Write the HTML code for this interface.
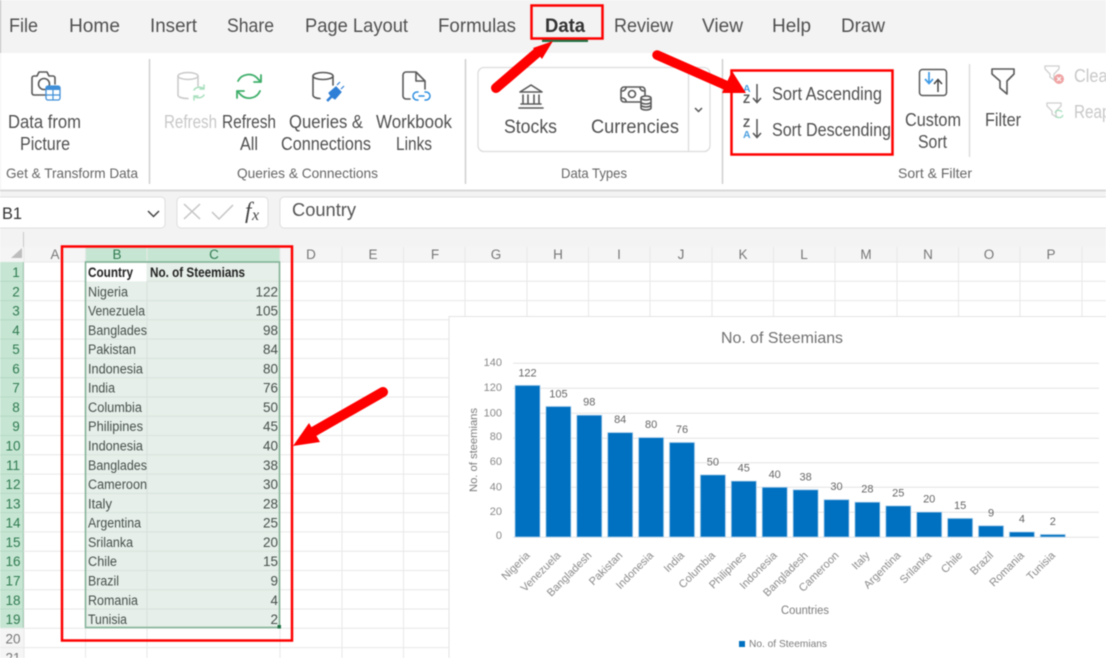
<!DOCTYPE html>
<html><head><meta charset="utf-8"><style>
html,body{margin:0;padding:0;background:#fff}
svg{display:block;filter:blur(.4px)}
text{font-family:"Liberation Sans",sans-serif;fill:#4a4a4a}
.t{font-size:19.5px;fill:#505050}
.r{font-size:18.5px;fill:#505050}
.g{font-size:14px;fill:#666}
.c{font-size:13.5px;fill:#474f4b}
.n{font-size:13.5px;fill:#474f4b;text-anchor:end}
.rh{font-size:13.5px;fill:#2f7a50;text-anchor:middle}
.ch{font-size:13.5px;fill:#777;text-anchor:middle}
.v{font-size:11px;fill:#666;text-anchor:middle}
.x{font-size:11px;fill:#8a8a8a;text-anchor:end}
.y{font-size:11px;fill:#8a8a8a;text-anchor:end}
.i{fill:none;stroke:#595959;stroke-width:1.6;stroke-linecap:round;stroke-linejoin:round}
</style></head><body>
<svg width="1106" height="658" viewBox="0 0 1106 658" xmlns="http://www.w3.org/2000/svg">
<rect width="1106" height="658" fill="#fff"/>
<rect width="1106" height="247" fill="#f3f3f3"/>
<rect x="0" y="0" width="1" height="53" fill="#bbb"/>
<rect x="1" y="53" width="1105" height="137" fill="#fff"/>
<rect x="0" y="189.500" width="1106" height="2" fill="#d9d9d9"/>
<text class="t" x="9" y="32" textLength="29" lengthAdjust="spacingAndGlyphs">File</text>
<text class="t" x="69" y="32" textLength="51" lengthAdjust="spacingAndGlyphs">Home</text>
<text class="t" x="150" y="32" textLength="47" lengthAdjust="spacingAndGlyphs">Insert</text>
<text class="t" x="227" y="32" textLength="47" lengthAdjust="spacingAndGlyphs">Share</text>
<text class="t" x="305" y="32" textLength="103" lengthAdjust="spacingAndGlyphs">Page Layout</text>
<text class="t" x="438" y="32" textLength="78" lengthAdjust="spacingAndGlyphs">Formulas</text>
<text class="t" x="545" y="32" textLength="40" lengthAdjust="spacingAndGlyphs" style="font-weight:700;fill:#333">Data</text>
<text class="t" x="614" y="32" textLength="59" lengthAdjust="spacingAndGlyphs">Review</text>
<text class="t" x="702" y="32" textLength="41" lengthAdjust="spacingAndGlyphs">View</text>
<text class="t" x="772" y="32" textLength="39" lengthAdjust="spacingAndGlyphs">Help</text>
<text class="t" x="841" y="32" textLength="44" lengthAdjust="spacingAndGlyphs">Draw</text>
<rect x="542" y="39" width="46" height="3" fill="#217346"/>
<path d="M149.500 59V184M465.500 59V184M722.500 59V184" stroke="#cfcfcf" stroke-width="1.500"/>
<path d="M969.500 64V157" stroke="#dcdcdc" stroke-width="1.500"/>
<text class="r" x="8" y="128" textLength="73" lengthAdjust="spacingAndGlyphs">Data from</text>
<text class="r" x="20" y="150" textLength="50" lengthAdjust="spacingAndGlyphs">Picture</text>
<text class="r" x="164" y="128" textLength="53" lengthAdjust="spacingAndGlyphs" style="fill:#c8c8c8">Refresh</text>
<text class="r" x="222" y="128" textLength="54" lengthAdjust="spacingAndGlyphs">Refresh</text>
<text class="r" x="240" y="150" textLength="18" lengthAdjust="spacingAndGlyphs">All</text>
<text class="r" x="289" y="128" textLength="74" lengthAdjust="spacingAndGlyphs">Queries &amp;</text>
<text class="r" x="281" y="150" textLength="90" lengthAdjust="spacingAndGlyphs">Connections</text>
<text class="r" x="376" y="128" textLength="76" lengthAdjust="spacingAndGlyphs">Workbook</text>
<text class="r" x="396" y="150" textLength="36" lengthAdjust="spacingAndGlyphs">Links</text>
<text class="g" x="6" y="178" textLength="132" lengthAdjust="spacingAndGlyphs">Get &amp; Transform Data</text>
<text class="g" x="237" y="178" textLength="141" lengthAdjust="spacingAndGlyphs">Queries &amp; Connections</text>
<text class="g" x="561" y="178" textLength="66" lengthAdjust="spacingAndGlyphs">Data Types</text>
<text class="g" x="898" y="178" textLength="74" lengthAdjust="spacingAndGlyphs">Sort &amp; Filter</text>
<path class="i" d="M37 76l2-4h8l2 4h4a2 2 0 0 1 2 2v6M45 95H34a2 2 0 0 1-2-2V78a2 2 0 0 1 2-2h3"/>
<circle class="i" cx="44" cy="84" r="5.500"/>
<rect x="46" y="86" width="14" height="14" rx="2" fill="#fff" stroke="#3f8fd8" stroke-width="1.300"/>
<rect x="46" y="86" width="14" height="4" fill="#3f8fd8"/>
<path d="M53 90v10M46 95h14" stroke="#3f8fd8" stroke-width="1.200"/>
<g fill="none" stroke="#c9c9c9" stroke-width="1.500" stroke-linecap="round">
<ellipse cx="188" cy="76" rx="10" ry="3.500"/><path d="M178 76v19c0 2 4 3.500 10 3.500M198 76v10"/></g>
<g fill="none" stroke="#a8dfbd" stroke-width="1.500" stroke-linecap="round"><path d="M194 90a6 5 0 0 1 10-1M204 95a6 5 0 0 1-10 1M204 85v4h-4M194 100v-4h4"/></g>
<g fill="none" stroke="#3fae6a" stroke-width="1.800" stroke-linecap="round" stroke-linejoin="round"><path d="M238 81a12 12 0 0 1 20-2l3 3M260 91a12 12 0 0 1-20 3l-3-3M261 75v7h-7M237 98v-7h7"/></g>
<ellipse class="i" cx="323" cy="76" rx="10" ry="3.500"/><path class="i" d="M313 76v19c0 2 3 3.500 7 3.500M333 76v9"/>
<path d="M327 100l4-4-2-3 7-6 5 5-6 7-3-2-4 4z M337 85l3-3M341 89l3-3" fill="#2f7fd6" stroke="#2f7fd6" stroke-width="1.200"/>
<path class="i" d="M410 99h-4a3 3 0 0 1-3-3V75a3 3 0 0 1 3-3h10l9 9v8M416 72v9h9"/>
<path d="M418 92h-1a4 4 0 0 0 0 8h1M425 92h1a4 4 0 0 1 0 8h-1M419 96h5" fill="none" stroke="#2f8fe0" stroke-width="1.500" stroke-linecap="round"/>
<rect x="478" y="67.500" width="232" height="84" rx="6" fill="#fff" stroke="#dcdcdc" stroke-width="1.300"/>
<path d="M688.500 68V151" stroke="#dcdcdc" stroke-width="1.300"/>
<path d="M695 108l3.500 3.500 3.500-3.500" fill="none" stroke="#555" stroke-width="1.500"/>
<path class="i" d="M520 92l11-7 11 7zM523 95v8M528 95v8M534 95v8M539 95v8M521 104h20M519 108h24"/>
<text class="r" x="504" y="133" textLength="53" lengthAdjust="spacingAndGlyphs" style="font-size:19.500px">Stocks</text>
<text class="r" x="591" y="133" textLength="88" lengthAdjust="spacingAndGlyphs" style="font-size:19.500px">Currencies</text>
<path class="i" d="M640 102h-16a3 3 0 0 1-3-3v-9a3 3 0 0 1 3-3h18a3 3 0 0 1 3 3v5M622 91a4 4 0 0 0 4-3M640 88a4 4 0 0 0 4 3M622 98a4 4 0 0 1 4 3"/>
<circle class="i" cx="632" cy="94" r="3.500"/>
<path class="i" d="M641 98a5 2 0 0 1 10 0a5 2 0 0 1-10 0v10a5 2 0 0 0 10 0V98M641 102a5 2 0 0 0 10 0M641 105a5 2 0 0 0 10 0"/>
<text x="743" y="92" style="font-size:10.500px;font-weight:700;fill:#4a9fe0">A</text>
<text x="743" y="103" style="font-size:11.500px;font-weight:700;fill:#555">Z</text>
<path d="M757 84v18M753 98l4 4.500 4-4.500" fill="none" stroke="#555" stroke-width="1.500"/>
<text x="743" y="127" style="font-size:11.500px;font-weight:700;fill:#555">Z</text>
<text x="743" y="138" style="font-size:10.500px;font-weight:700;fill:#4a9fe0">A</text>
<path d="M757 119v18M753 133l4 4.500 4-4.500" fill="none" stroke="#555" stroke-width="1.500"/>
<text class="r" x="772" y="100" textLength="110" lengthAdjust="spacingAndGlyphs">Sort Ascending</text>
<text class="r" x="772" y="136" textLength="119" lengthAdjust="spacingAndGlyphs">Sort Descending</text>
<rect x="919.500" y="69.500" width="27" height="26" rx="3" fill="none" stroke="#595959" stroke-width="1.500"/>
<path d="M929 72v11M925 79l4 4.500 4-4.500" fill="none" stroke="#3f9be6" stroke-width="1.700"/>
<path d="M938 92V80M934 84l4-4.500 4 4.500" fill="none" stroke="#444" stroke-width="1.500"/>
<text class="r" x="905" y="126" textLength="56" lengthAdjust="spacingAndGlyphs">Custom</text>
<text class="r" x="918" y="148" textLength="29" lengthAdjust="spacingAndGlyphs">Sort</text>
<path class="i" d="M992 69h22v5l-7 7v13l-7-6v-7l-8-7z"/>
<text class="r" x="985" y="126" textLength="36" lengthAdjust="spacingAndGlyphs">Filter</text>
<path d="M1045 66h14v3l-5 5v6l-4-3v-3l-5-5z" fill="none" stroke="#cfcfcf" stroke-width="1.300"/>
<circle cx="1059" cy="79" r="5" fill="#f0a3a3"/>
<path d="M1057 77l4 4M1061 77l-4 4" stroke="#fff" stroke-width="1.200"/>
<text class="r" x="1074" y="82" textLength="39" lengthAdjust="spacingAndGlyphs" style="fill:#c8c8c8">Clear</text>
<path d="M1047 103h14v3l-5 5v6l-4-3v-3l-5-5z" fill="none" stroke="#cfcfcf" stroke-width="1.300"/>
<path d="M1055 113a4 4 0 0 1 7-1M1063 115a4 4 0 0 1-7 1" fill="none" stroke="#a8dfbd" stroke-width="1.300"/>
<text class="r" x="1074" y="118" textLength="56" lengthAdjust="spacingAndGlyphs" style="fill:#c8c8c8">Reapply</text>
<rect x="-4" y="197" width="169" height="31" rx="4" fill="#fff" stroke="#dedede"/>
<text x="2" y="219" textLength="20" lengthAdjust="spacingAndGlyphs" style="font-size:17px;fill:#333">B1</text>
<path d="M148 211l5.500 5.500 5.500-5.500" fill="none" stroke="#444" stroke-width="1.500"/>
<rect x="177" y="197" width="91" height="31" rx="4" fill="#fff" stroke="#dedede"/>
<path d="M184 204l16 15M200 204l-16 15" stroke="#c4c4c4" stroke-width="1.500"/>
<path d="M212 212l7 7 14-14" fill="none" stroke="#c4c4c4" stroke-width="1.500"/>
<text x="245" y="218" style="font-family:'Liberation Serif',serif;font-style:italic;font-size:23px;fill:#444">f</text>
<text x="252" y="220" style="font-family:'Liberation Serif',serif;font-style:italic;font-size:16px;fill:#444">x</text>
<rect x="280" y="197" width="830" height="31" rx="4" fill="#fff" stroke="#dedede"/>
<text x="292" y="216" textLength="64" lengthAdjust="spacingAndGlyphs" style="font-size:18px;fill:#555">Country</text>
<path d="M23.500 232v15" stroke="#c9c9c9" stroke-width="1"/>
<rect x="0" y="247" width="1106" height="15" fill="#f5f5f5"/>
<rect x="0" y="262" width="24" height="396" fill="#f5f5f5"/>
<path d="M22 248v10H11z" fill="#bdbdbd"/>
<rect x="85.500" y="247" width="194.500" height="15" fill="#c6e6d3"/>
<rect x="0" y="262" width="24" height="366" fill="#c6e6d3"/>
<rect x="23" y="262" width="1.500" height="366" fill="#6fa886"/>
<path d="M0 281.300H24M0 300.600H24M0 319.800H24M0 339.100H24M0 358.400H24M0 377.700H24M0 397H24M0 416.200H24M0 435.500H24M0 454.800H24M0 474.100H24M0 493.400H24M0 512.600H24M0 531.900H24M0 551.200H24M0 570.500H24M0 589.800H24M0 609H24" stroke="#b0d4be" stroke-width=".8"/>
<path d="M24 262H1106M24 281.300H1106M24 300.600H1106M24 319.800H1106M24 339.100H1106M24 358.400H1106M24 377.700H1106M24 397H1106M24 416.200H1106M24 435.500H1106M24 454.800H1106M24 474.100H1106M24 493.400H1106M24 512.600H1106M24 531.900H1106M24 551.200H1106M24 570.500H1106M24 589.800H1106M24 609H1106M0 628.300H1106M0 647.600H1106M24 247V658M85.500 247V658M147 247V658M280 247V658M342 247V658M403.500 247V658M465 247V658M527 247V658M588.500 247V658M650 247V658M712 247V658M773.500 247V658M835 247V658M897 247V658M958.500 247V658M1020 247V658M1082 247V658" stroke="#e8e8e8" stroke-width="1" fill="none"/>
<text class="ch" x="55" y="259">A</text><text class="rh" x="117" y="259">B</text><text class="rh" x="214" y="259">C</text><text class="ch" x="311" y="259">D</text><text class="ch" x="373" y="259">E</text><text class="ch" x="435" y="259">F</text><text class="ch" x="496" y="259">G</text><text class="ch" x="558" y="259">H</text><text class="ch" x="619" y="259">I</text><text class="ch" x="681" y="259">J</text><text class="ch" x="743" y="259">K</text><text class="ch" x="804" y="259">L</text><text class="ch" x="866" y="259">M</text><text class="ch" x="928" y="259">N</text><text class="ch" x="989" y="259">O</text><text class="ch" x="1051" y="259">P</text>
<text class="rh" x="16" y="277">1</text><text class="rh" x="16" y="296.300">2</text><text class="rh" x="16" y="315.600">3</text><text class="rh" x="16" y="334.800">4</text><text class="rh" x="16" y="354.100">5</text><text class="rh" x="16" y="373.400">6</text><text class="rh" x="16" y="392.700">7</text><text class="rh" x="16" y="412">8</text><text class="rh" x="16" y="431.200">9</text><text class="rh" x="13" y="450.500">10</text><text class="rh" x="13" y="469.800">11</text><text class="rh" x="13" y="489.100">12</text><text class="rh" x="13" y="508.400">13</text><text class="rh" x="13" y="527.600">14</text><text class="rh" x="13" y="546.900">15</text><text class="rh" x="13" y="566.200">16</text><text class="rh" x="13" y="585.500">17</text><text class="rh" x="13" y="604.800">18</text><text class="rh" x="13" y="624">19</text><text class="ch" x="13" y="643.300">20</text><text class="ch" x="13" y="662.500">21</text>
<rect x="85.500" y="262" width="194.500" height="365" fill="#e6efe9"/>
<rect x="86.500" y="263" width="60" height="18.300" fill="#fff"/>
<path d="M86 300.600H280M86 319.800H280M86 339.100H280M86 358.400H280M86 377.700H280M86 397H280M86 416.200H280M86 435.500H280M86 454.800H280M86 474.100H280M86 493.400H280M86 512.600H280M86 531.900H280M86 551.200H280M86 570.500H280M86 589.800H280M86 609H280M147 281.300V627M147 281.300H280" stroke="#d8e1dc" stroke-width="1" fill="none"/>
<rect x="85.500" y="262" width="194" height="365.500" fill="none" stroke="#7fb094" stroke-width="1.500"/>
<rect x="277.500" y="625" width="3.500" height="3.500" fill="#217346"/>
<text class="c" x="88" y="277" textLength="45" lengthAdjust="spacingAndGlyphs" style="font-weight:700;fill:#222">Country</text>
<text class="c" x="150" y="277" textLength="95" lengthAdjust="spacingAndGlyphs" style="font-weight:700;fill:#222">No. of Steemians</text>
<text class="c" x="88" y="296.300" textLength="40" lengthAdjust="spacingAndGlyphs">Nigeria</text><text class="n" x="278" y="296.300">122</text>
<text class="c" x="88" y="315.600" textLength="57" lengthAdjust="spacingAndGlyphs">Venezuela</text><text class="n" x="278" y="315.600">105</text>
<text class="c" x="88" y="334.800" textLength="59" lengthAdjust="spacingAndGlyphs">Banglades</text><text class="n" x="278" y="334.800">98</text>
<text class="c" x="88" y="354.100" textLength="48" lengthAdjust="spacingAndGlyphs">Pakistan</text><text class="n" x="278" y="354.100">84</text>
<text class="c" x="88" y="373.400" textLength="55" lengthAdjust="spacingAndGlyphs">Indonesia</text><text class="n" x="278" y="373.400">80</text>
<text class="c" x="88" y="392.700" textLength="27" lengthAdjust="spacingAndGlyphs">India</text><text class="n" x="278" y="392.700">76</text>
<text class="c" x="88" y="412" textLength="54" lengthAdjust="spacingAndGlyphs">Columbia</text><text class="n" x="278" y="412">50</text>
<text class="c" x="88" y="431.200" textLength="55" lengthAdjust="spacingAndGlyphs">Philipines</text><text class="n" x="278" y="431.200">45</text>
<text class="c" x="88" y="450.500" textLength="55" lengthAdjust="spacingAndGlyphs">Indonesia</text><text class="n" x="278" y="450.500">40</text>
<text class="c" x="88" y="469.800" textLength="59" lengthAdjust="spacingAndGlyphs">Banglades</text><text class="n" x="278" y="469.800">38</text>
<text class="c" x="88" y="489.100" textLength="59" lengthAdjust="spacingAndGlyphs">Cameroon</text><text class="n" x="278" y="489.100">30</text>
<text class="c" x="88" y="508.400" textLength="24" lengthAdjust="spacingAndGlyphs">Italy</text><text class="n" x="278" y="508.400">28</text>
<text class="c" x="88" y="527.600" textLength="53" lengthAdjust="spacingAndGlyphs">Argentina</text><text class="n" x="278" y="527.600">25</text>
<text class="c" x="88" y="546.900" textLength="45" lengthAdjust="spacingAndGlyphs">Srilanka</text><text class="n" x="278" y="546.900">20</text>
<text class="c" x="88" y="566.200" textLength="29" lengthAdjust="spacingAndGlyphs">Chile</text><text class="n" x="278" y="566.200">15</text>
<text class="c" x="88" y="585.500" textLength="31" lengthAdjust="spacingAndGlyphs">Brazil</text><text class="n" x="278" y="585.500">9</text>
<text class="c" x="88" y="604.800" textLength="50" lengthAdjust="spacingAndGlyphs">Romania</text><text class="n" x="278" y="604.800">4</text>
<text class="c" x="88" y="624" textLength="39" lengthAdjust="spacingAndGlyphs">Tunisia</text><text class="n" x="278" y="624">2</text>
<rect x="449" y="316.500" width="660" height="345" fill="#fff" stroke="#e3e3e3"/>
<text x="721" y="343" textLength="122" lengthAdjust="spacingAndGlyphs" style="font-size:16px;fill:#707070">No. of Steemians</text>
<path d="M513 363.300H1099M513 388.300H1099M513 413.300H1099M513 438.300H1099M513 462.700H1099M513 487.300H1099M513 512.300H1099M513 537.300H1099" stroke="#e4e4e4" stroke-width="1"/>
<g fill="#0070c0" stroke="#a9cdea" stroke-width=".8">
<rect x="515" y="385.400" width="25" height="151.600"/><rect x="545.900" y="406.500" width="25" height="130.500"/><rect x="576.800" y="415.200" width="25" height="121.800"/><rect x="607.700" y="432.600" width="25" height="104.400"/><rect x="638.600" y="437.600" width="25" height="99.400"/><rect x="669.500" y="442.500" width="25" height="94.500"/><rect x="700.400" y="474.900" width="25" height="62.100"/><rect x="731.300" y="481.100" width="25" height="55.900"/><rect x="762.200" y="487.300" width="25" height="49.700"/><rect x="793.100" y="489.800" width="25" height="47.200"/><rect x="824" y="499.700" width="25" height="37.300"/><rect x="854.900" y="502.200" width="25" height="34.800"/><rect x="885.800" y="505.900" width="25" height="31.100"/><rect x="916.700" y="512.100" width="25" height="24.900"/><rect x="947.600" y="518.400" width="25" height="18.600"/><rect x="978.500" y="525.800" width="25" height="11.200"/><rect x="1009.400" y="532" width="25" height="5"/><rect x="1040.300" y="534.500" width="25" height="2.500"/>
</g>
<text class="v" x="527.500" y="376.500">122</text><text class="v" x="558.400" y="397.500">105</text><text class="v" x="589.300" y="405.700">98</text><text class="v" x="620.200" y="423">84</text><text class="v" x="651.100" y="428">80</text><text class="v" x="682" y="433">76</text><text class="v" x="712.900" y="465.400">50</text><text class="v" x="743.800" y="471.600">45</text><text class="v" x="774.700" y="477.800">40</text><text class="v" x="805.600" y="480.300">38</text><text class="v" x="836.500" y="490.200">30</text><text class="v" x="867.400" y="492.700">28</text><text class="v" x="898.300" y="496.400">25</text><text class="v" x="929.200" y="502.600">20</text><text class="v" x="960.100" y="508.900">15</text><text class="v" x="991" y="516.300">9</text><text class="v" x="1021.900" y="522.500">4</text><text class="v" x="1052.800" y="525">2</text>
<text class="y" x="502" y="366">140</text><text class="y" x="502" y="391">120</text><text class="y" x="502" y="416.500">100</text><text class="y" x="502" y="440">80</text><text class="y" x="502" y="465">60</text><text class="y" x="502" y="490.500">40</text><text class="y" x="502" y="515">20</text><text class="y" x="502" y="539">0</text>
<text x="477" y="492" transform="rotate(-90 477 492)" textLength="84" lengthAdjust="spacingAndGlyphs" style="font-size:11px;fill:#7c7c7c">No. of steemians</text>
<text class="x" x="530.500" y="556" transform="rotate(-45 530.500 556)">Nigeria</text>
<text class="x" x="561.400" y="556" transform="rotate(-45 561.400 556)">Venezuela</text>
<text class="x" x="592.300" y="556" transform="rotate(-45 592.300 556)">Bangladesh</text>
<text class="x" x="623.200" y="556" transform="rotate(-45 623.200 556)">Pakistan</text>
<text class="x" x="654.100" y="556" transform="rotate(-45 654.100 556)">Indonesia</text>
<text class="x" x="685" y="556" transform="rotate(-45 685 556)">India</text>
<text class="x" x="715.900" y="556" transform="rotate(-45 715.900 556)">Columbia</text>
<text class="x" x="746.800" y="556" transform="rotate(-45 746.800 556)">Philipines</text>
<text class="x" x="777.700" y="556" transform="rotate(-45 777.700 556)">Indonesia</text>
<text class="x" x="808.600" y="556" transform="rotate(-45 808.600 556)">Bangladesh</text>
<text class="x" x="839.500" y="556" transform="rotate(-45 839.500 556)">Cameroon</text>
<text class="x" x="870.400" y="556" transform="rotate(-45 870.400 556)">Italy</text>
<text class="x" x="901.300" y="556" transform="rotate(-45 901.300 556)">Argentina</text>
<text class="x" x="932.200" y="556" transform="rotate(-45 932.200 556)">Srilanka</text>
<text class="x" x="963.100" y="556" transform="rotate(-45 963.100 556)">Chile</text>
<text class="x" x="994" y="556" transform="rotate(-45 994 556)">Brazil</text>
<text class="x" x="1024.900" y="556" transform="rotate(-45 1024.900 556)">Romania</text>
<text class="x" x="1055.800" y="556" transform="rotate(-45 1055.800 556)">Tunisia</text>
<text x="781" y="614" textLength="48" lengthAdjust="spacingAndGlyphs" style="font-size:11.500px;fill:#7c7c7c">Countries</text>
<rect x="739" y="641" width="6" height="6" fill="#0070c0"/>
<text x="749" y="647" textLength="78" lengthAdjust="spacingAndGlyphs" style="font-size:10.500px;fill:#7c7c7c">No. of Steemians</text>
<g fill="none" stroke="#fe0000" stroke-width="2.500">
<rect x="531.500" y="5.500" width="71" height="33"/>
<rect x="731.500" y="70.500" width="161" height="84"/>
<rect x="62" y="246.500" width="230" height="394"/>
</g>
<g fill="#fe0000" stroke-linejoin="round">
<path d="M496 88L538 52" stroke="#fe0000" stroke-width="10" stroke-linecap="round"/>
<path d="M553 41L533 48L542 59Z"/>
<path d="M657 55L732 88" stroke="#fe0000" stroke-width="9.500" stroke-linecap="round"/>
<path d="M746 93L732 71L722 93Z"/>
<path d="M383 392L313 432" stroke="#fe0000" stroke-width="10" stroke-linecap="round"/>
<path d="M293 446L309 423L320 442Z"/>
</g>
</svg>
</body></html>
